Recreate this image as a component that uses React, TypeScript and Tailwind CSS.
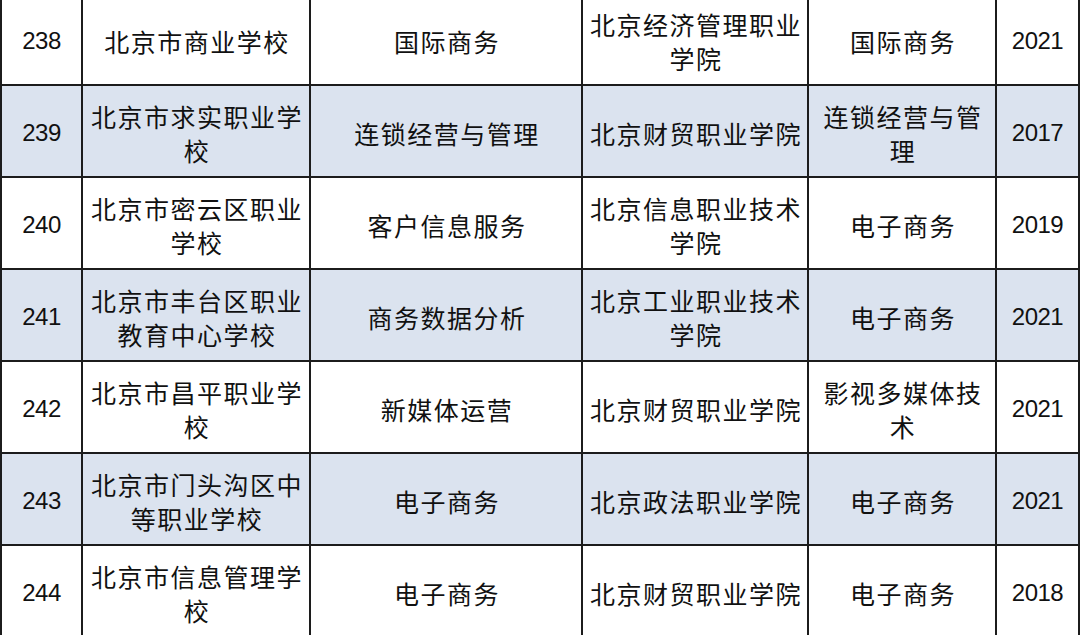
const rows = [
  { no: "238", school: ["北京市商业学校"], major: ["国际商务"], college: ["北京经济管理职业", "学院"], target: ["国际商务"], year: "2021" },
  { no: "239", school: ["北京市求实职业学", "校"], major: ["连锁经营与管理"], college: ["北京财贸职业学院"], target: ["连锁经营与管", "理"], year: "2017" },
  { no: "240", school: ["北京市密云区职业", "学校"], major: ["客户信息服务"], college: ["北京信息职业技术", "学院"], target: ["电子商务"], year: "2019" },
  { no: "241", school: ["北京市丰台区职业", "教育中心学校"], major: ["商务数据分析"], college: ["北京工业职业技术", "学院"], target: ["电子商务"], year: "2021" },
  { no: "242", school: ["北京市昌平职业学", "校"], major: ["新媒体运营"], college: ["北京财贸职业学院"], target: ["影视多媒体技", "术"], year: "2021" },
  { no: "243", school: ["北京市门头沟区中", "等职业学校"], major: ["电子商务"], college: ["北京政法职业学院"], target: ["电子商务"], year: "2021" },
  { no: "244", school: ["北京市信息管理学", "校"], major: ["电子商务"], college: ["北京财贸职业学院"], target: ["电子商务"], year: "2018" },
];

function TextCell({ lines }: { lines: string[] }) {
  return (
    <div className="flex flex-col items-center justify-center border-r-2 border-[#1c1c1c] pl-[2px] pt-[4px] text-center text-[25px] leading-[34px] tracking-[1.5px] [font-family:'Noto_Sans_CJK_SC',sans-serif]">
      {lines.map((line) => (
        <span key={line}>{line}</span>
      ))}
    </div>
  );
}

function NumCell({ value }: { value: string }) {
  return (
    <div className="flex items-center justify-center border-r-2 border-[#1c1c1c] pt-[4px] text-[24px] tracking-[-0.5px] [font-family:'Liberation_Sans',sans-serif]">
      {value}
    </div>
  );
}

export default function App() {
  return (
    <div className="h-[635px] w-[1080px] overflow-hidden bg-white text-[#111]">
      <div className="-mt-[6px] border-l-2 border-[#1c1c1c]">
        {rows.map((row, i) => (
          <div
            key={row.no}
            className={`grid h-[92px] grid-cols-[81px_228px_272px_226px_188px_83px] border-b-2 border-[#1c1c1c] ${
              i % 2 === 1 ? "bg-[#dbe3ef]" : "bg-white"
            }`}
          >
            <NumCell value={row.no} />
            <TextCell lines={row.school} />
            <TextCell lines={row.major} />
            <TextCell lines={row.college} />
            <TextCell lines={row.target} />
            <NumCell value={row.year} />
          </div>
        ))}
      </div>
    </div>
  );
}
